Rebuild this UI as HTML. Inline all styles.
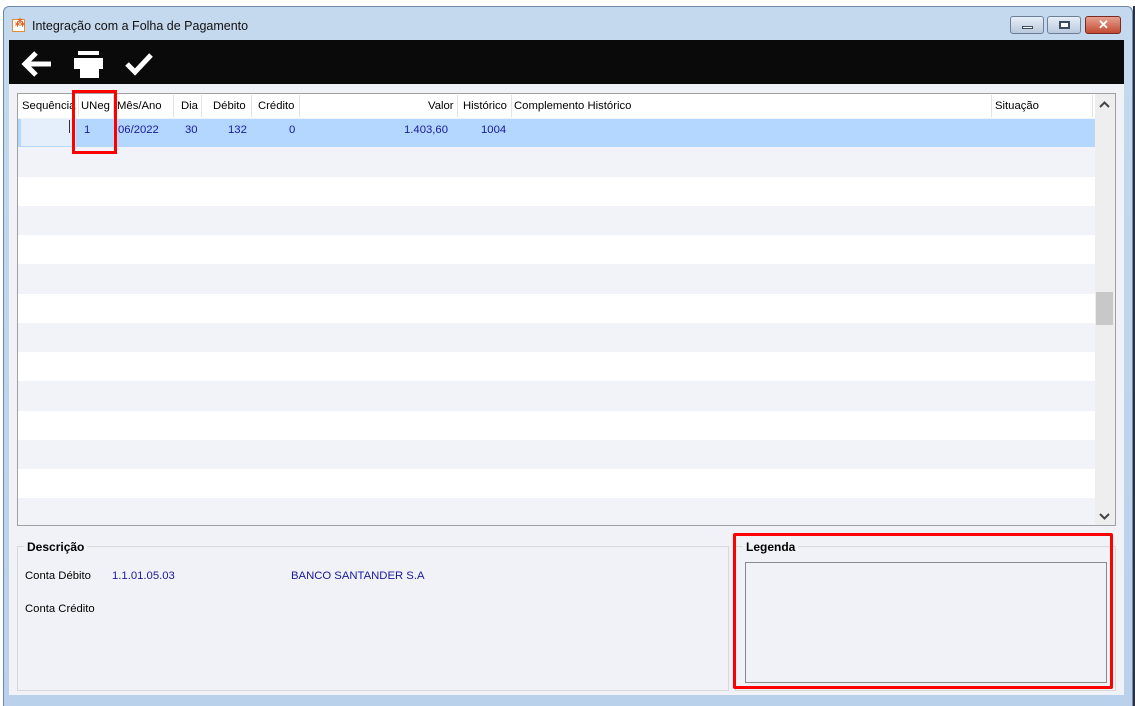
<!DOCTYPE html>
<html><head><meta charset="utf-8"><style>
*{margin:0;padding:0;box-sizing:border-box}
body{width:1135px;height:706px;background:#fff;position:relative;overflow:hidden;font-family:"Liberation Sans",sans-serif;font-size:11.3px;color:#000}
.a{position:absolute}
.t{position:absolute;white-space:nowrap;font-size:11.3px}
.nv{color:#1a1a9a}
</style></head><body>
<div class="a" style="left:3px;top:6px;width:1130px;height:700px;background:linear-gradient(#c5d9ee,#b9d1ea);border:1px solid #6f8aa8;border-bottom:none;border-radius:6px 6px 0 0"></div>
<div class="a" style="left:1133px;top:6px;width:2px;height:700px;background:#2a3040"></div>
<div class="a" style="left:12px;top:19px;width:13px;height:13px;background:#fff;border:1px solid #e98a3a"></div>
<div class="t" style="left:15px;top:18px;color:#e0601a;font-size:10px;font-weight:bold">⁂</div>
<div class="t" style="left:32px;top:19px;font-size:12.5px;color:#111">Integração com a Folha de Pagamento</div>
<div class="a" style="left:1010px;top:16px;width:34px;height:18px;border:1px solid #6d7f96;border-radius:3px;background:linear-gradient(#e6eef8,#b9c9dc)"><div class="a" style="left:11px;top:9px;width:11px;height:3px;background:#fff;border:1px solid #3c4c60"></div></div>
<div class="a" style="left:1047px;top:16px;width:34px;height:18px;border:1px solid #6d7f96;border-radius:3px;background:linear-gradient(#e6eef8,#b9c9dc)"><div class="a" style="left:11px;top:4px;width:11px;height:8px;border:2px solid #3c4c60;background:#fff"></div></div>
<div class="a" style="left:1085px;top:16px;width:36px;height:18px;border:1px solid #7a2a20;border-radius:3px;background:linear-gradient(#e8a090,#c24a32)"><div class="t" style="left:12px;top:0px;color:#fff;font-weight:bold;font-size:13px">✕</div></div>
<div class="a" style="left:9px;top:40px;width:1115px;height:44px;background:#0a0a0a"></div>
<svg class="a" style="left:20px;top:49px" width="34" height="30" viewBox="0 0 34 30"><path d="M16 4 L5 15 L16 26 M5 15 H31" stroke="#fff" stroke-width="5" fill="none"/></svg>
<svg class="a" style="left:72px;top:50px" width="34" height="30" viewBox="0 0 34 30"><rect x="6" y="1" width="21" height="4" fill="#fff"/><path d="M2 8 H31 V19 H27 V28 H8 V19 H2 Z" fill="#fff"/></svg>
<svg class="a" style="left:124px;top:51px" width="30" height="26" viewBox="0 0 30 26"><path d="M3 13 L11 21 L27 4" stroke="#fff" stroke-width="5" fill="none"/></svg>
<div class="a" style="left:9px;top:84px;width:1115px;height:611px;background:#f0f2f8"></div>
<div class="a" style="left:17px;top:93px;width:1099px;height:433px;border:1px solid #a0a0a0;background:#f1f3f9"></div>
<div class="a" style="left:18px;top:94px;width:1077px;height:24px;background:#fff"></div>
<div class="a" style="left:18px;top:119px;width:1077px;height:28px;background:#b3d7ff"></div>
<div class="a" style="left:21px;top:119px;width:55px;height:27px;background:#e4effb"></div>
<div class="a" style="left:69px;top:120px;width:1px;height:13px;background:#333"></div>
<div class="a" style="left:18px;top:177px;width:1077px;height:29px;background:#fff"></div>
<div class="a" style="left:18px;top:235px;width:1077px;height:29px;background:#fff"></div>
<div class="a" style="left:18px;top:294px;width:1077px;height:29px;background:#fff"></div>
<div class="a" style="left:18px;top:352px;width:1077px;height:29px;background:#fff"></div>
<div class="a" style="left:18px;top:411px;width:1077px;height:29px;background:#fff"></div>
<div class="a" style="left:18px;top:469px;width:1077px;height:29px;background:#fff"></div>
<div class="a" style="left:78px;top:95px;width:1px;height:22px;background:#e3e3e3"></div>
<div class="a" style="left:113px;top:95px;width:1px;height:22px;background:#e3e3e3"></div>
<div class="a" style="left:173px;top:95px;width:1px;height:22px;background:#e3e3e3"></div>
<div class="a" style="left:201px;top:95px;width:1px;height:22px;background:#e3e3e3"></div>
<div class="a" style="left:251px;top:95px;width:1px;height:22px;background:#e3e3e3"></div>
<div class="a" style="left:299px;top:95px;width:1px;height:22px;background:#e3e3e3"></div>
<div class="a" style="left:457px;top:95px;width:1px;height:22px;background:#e3e3e3"></div>
<div class="a" style="left:511px;top:95px;width:1px;height:22px;background:#e3e3e3"></div>
<div class="a" style="left:991px;top:95px;width:1px;height:22px;background:#e3e3e3"></div>
<div class="a" style="left:1092px;top:95px;width:1px;height:22px;background:#e3e3e3"></div>
<div class="t" style="left:22px;top:100px">Sequência</div>
<div class="t" style="left:81px;top:100px">UNeg</div>
<div class="t" style="left:117px;top:100px">Mês/Ano</div>
<div class="t" style="left:181px;top:100px">Dia</div>
<div class="t" style="left:213px;top:100px">Débito</div>
<div class="t" style="left:258px;top:100px">Crédito</div>
<div class="t" style="left:428px;top:100px">Valor</div>
<div class="t" style="left:463px;top:100px">Histórico</div>
<div class="t" style="left:514px;top:100px">Complemento Histórico</div>
<div class="t" style="left:995px;top:100px">Situação</div>
<div class="t nv" style="left:84px;top:124px">1</div>
<div class="t nv" style="left:118px;top:124px">06/2022</div>
<div class="t nv" style="left:185px;top:124px">30</div>
<div class="t nv" style="left:228px;top:124px">132</div>
<div class="t nv" style="left:289px;top:124px">0</div>
<div class="t nv" style="left:404px;top:124px">1.403,60</div>
<div class="t nv" style="left:481px;top:124px">1004</div>
<div class="a" style="left:1095px;top:94px;width:20px;height:431px;background:#eeeeee"></div>
<svg class="a" style="left:1099px;top:101px" width="11" height="8"><path d="M1 6 L5.5 1.5 L10 6" stroke="#444" stroke-width="2" fill="none"/></svg>
<svg class="a" style="left:1099px;top:512px" width="11" height="8"><path d="M1 2 L5.5 6.5 L10 2" stroke="#444" stroke-width="2" fill="none"/></svg>
<div class="a" style="left:1096px;top:292px;width:17px;height:33px;background:#c8c8c8"></div>
<div class="a" style="left:72px;top:90px;width:45px;height:64px;border:3px solid #f00"></div>
<div class="a" style="left:17px;top:546px;width:712px;height:145px;border:1px solid #d8d8d8"></div>
<div class="t" style="left:24px;top:540px;background:#f0f2f8;padding:0 3px;font-weight:bold;font-size:12px">Descrição</div>
<div class="t" style="left:25px;top:570px">Conta Débito</div>
<div class="t nv" style="left:112px;top:570px">1.1.01.05.03</div>
<div class="t nv" style="left:291px;top:570px">BANCO SANTANDER S.A</div>
<div class="t" style="left:25px;top:603px">Conta Crédito</div>
<div class="a" style="left:735px;top:546px;width:381px;height:145px;border:1px solid #d8d8d8"></div>
<div class="t" style="left:743px;top:540px;background:#f0f2f8;padding:0 3px;font-weight:bold;font-size:12px">Legenda</div>
<div class="a" style="left:745px;top:562px;width:362px;height:121px;border:1px solid #8a8a8a"></div>
<div class="a" style="left:733px;top:533px;width:380px;height:156px;border:3px solid #f00;border-radius:2px"></div>
</body></html>
